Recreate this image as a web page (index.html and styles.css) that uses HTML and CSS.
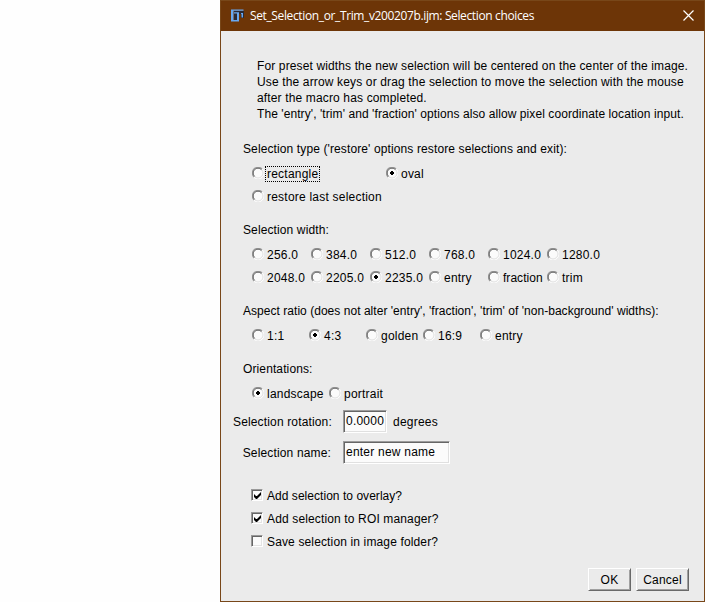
FILE: index.html
```html
<!DOCTYPE html>
<html lang="en">
<head>
<meta charset="utf-8">
<title>Selection choices</title>
<link rel="stylesheet" href="styles.css">
</head>
<body>
<svg width="0" height="0" class="defs" aria-hidden="true">
  <symbol id="off" viewBox="0 0 12 12">
    <circle cx="6" cy="6" r="5" fill="#fbfbfb"/>
    <path d="M10.2 1.8A5.5 5.5 0 0 1 1.8 10.2" fill="none" stroke="#fff"/>
    <path d="M9.5 2.5A4.6 4.6 0 0 1 2.5 9.5" fill="none" stroke="#e3e3e3"/>
    <path d="M2 10A5.4 5.4 0 0 1 10 2" fill="none" stroke="#999" stroke-width="1.2"/>
    <path d="M2.6 9.4A4.6 4.6 0 0 1 9.4 2.6" fill="none" stroke="#666"/>
  </symbol>
  <symbol id="on" viewBox="0 0 12 12">
    <use href="#off"/>
    <path d="M5 4h2v1h1v2h-1v1h-2v-1h-1v-2h1z" fill="#000" shape-rendering="crispEdges"/>
  </symbol>
</svg>
<main class="dialog">
  <header class="titlebar">
    <svg class="logo" viewBox="0 0 14 14">
      <path d="M3 2h10v7h-3V5H8v6H3z" fill="#2b2a35"/>
      <path d="M0 .5h12.500v1.200H2.500V11H6V4.500H3V3.300h5V12.500H0zM10 4h2v4.500h-1.500V5H10z" fill="#68a8f2"/>
    </svg>
    <h1>Set_Selection_or_Trim_v200207b.ijm: Selection choices</h1>
    <svg class="close" viewBox="0 0 11 11"><path d="M.5.5l10 10M10.5.5l-10 10" stroke="#fff" stroke-width="1.2" fill="none"/></svg>
  </header>
  <form class="content">
    <p class="message"><span class="m1">For preset widths the new selection will be centered on the center of the image.</span><br><span class="m2">Use the arrow keys or drag the selection to move the selection with the mouse</span><br><span class="m2">after the macro has completed.</span><br><span class="m4">The 'entry', 'trim' and 'fraction' options also allow pixel coordinate location input.</span></p>

    <h2>Selection type ('restore' options restore selections and exit):</h2>
    <div class="choices type">
      <label><svg><use href="#off"/></svg><span class="focused">rectangle</span></label>
      <label><svg><use href="#on"/></svg><span>oval</span></label>
      <label><svg><use href="#off"/></svg><span>restore last selection</span></label>
    </div>

    <h2>Selection width:</h2>
    <div class="choices widths">
      <label><svg><use href="#off"/></svg><span>256.0</span></label>
      <label><svg><use href="#off"/></svg><span>384.0</span></label>
      <label><svg><use href="#off"/></svg><span>512.0</span></label>
      <label><svg><use href="#off"/></svg><span>768.0</span></label>
      <label><svg><use href="#off"/></svg><span>1024.0</span></label>
      <label><svg><use href="#off"/></svg><span>1280.0</span></label>
      <label><svg><use href="#off"/></svg><span>2048.0</span></label>
      <label><svg><use href="#off"/></svg><span>2205.0</span></label>
      <label><svg><use href="#on"/></svg><span>2235.0</span></label>
      <label><svg><use href="#off"/></svg><span>entry</span></label>
      <label><svg><use href="#off"/></svg><span class="tight">fraction</span></label>
      <label><svg><use href="#off"/></svg><span>trim</span></label>
    </div>

    <h2 class="ratio-title">Aspect ratio (does not alter 'entry', 'fraction', 'trim' of 'non-background' widths):</h2>
    <div class="choices ratio">
      <label><svg><use href="#off"/></svg><span>1:1</span></label>
      <label><svg><use href="#on"/></svg><span>4:3</span></label>
      <label><svg><use href="#off"/></svg><span>golden</span></label>
      <label><svg><use href="#off"/></svg><span>16:9</span></label>
      <label><svg><use href="#off"/></svg><span>entry</span></label>
    </div>

    <h2>Orientations:</h2>
    <div class="choices orient">
      <label><svg><use href="#on"/></svg><span>landscape</span></label>
      <label><svg><use href="#off"/></svg><span>portrait</span></label>
    </div>

    <div class="field rotation"><span class="caption">Selection rotation:</span><span class="input short">0.0000</span><span>degrees</span></div>
    <div class="field"><span class="caption">Selection name:</span><span class="input long">enter new name</span></div>

    <div class="checks">
      <label><i class="box"><svg viewBox="0 0 7 7"><path d="M0 2v3l2 2h1l4-4V0L3 4H2z"/></svg></i><span class="tight">Add selection to overlay?</span></label>
      <label><i class="box"><svg viewBox="0 0 7 7"><path d="M0 2v3l2 2h1l4-4V0L3 4H2z"/></svg></i><span>Add selection to ROI manager?</span></label>
      <label><i class="box"></i><span>Save selection in image folder?</span></label>
    </div>

    <div class="buttons"><button type="button" class="ok">OK</button><button type="button" class="cancel">Cancel</button></div>
  </form>
</main>
</body>
</html>
```
FILE: styles.css
```css
* { box-sizing: border-box; }
body {
  margin: 0;
  height: 602px;
  overflow: hidden;
  background: #fefefe;
  color: #000;
  font: 12px/16px "Liberation Sans", Arial, sans-serif;
  letter-spacing: 0.22px;
}
.defs { position: absolute; }
.dialog {
  width: 485px;
  height: 602px;
  margin-left: 220px;
  border: 1px solid #784719;
  background: #ebebeb;
}
.titlebar {
  display: flex;
  align-items: center;
  height: 30px;
  padding: 0 10px;
  background: #6d3507;
  color: #fff;
}
.logo { width: 14px; height: 14px; }
.titlebar h1 {
  flex: 1;
  margin: 0 0 0 5px;
  font: 12px/16px "Open Sans", "Noto Sans", sans-serif;
  letter-spacing: -0.37px;
  white-space: nowrap;
}
.close { width: 11px; height: 11px; margin-top: -2px; }
.content { padding: 27px 15px 0 12px; }
.message { margin: 0 0 19px 24px; white-space: nowrap; }
.m1 { letter-spacing: 0.127px; }
.m2 { letter-spacing: 0.146px; }
.m4 { letter-spacing: 0.08px; }
h2 {
  height: 16px;
  margin: 14px 0 5px 10px;
  font-size: 12px;
  font-weight: normal;
  line-height: 16px;
  letter-spacing: 0.115px;
  white-space: nowrap;
}
.ratio-title { letter-spacing: 0.036px; }
.tight { letter-spacing: 0.04px; }
.choices { display: grid; grid-auto-rows: 23px; margin-left: 19px; }
.choices label, .checks label { display: flex; align-items: center; height: 23px; white-space: nowrap; }
.choices svg { width: 12px; height: 12px; margin: -1px 3px 0 0; flex: none; }
.type { grid-template-columns: 134px 134px; }
.widths { grid-template-columns: repeat(6, 59px); }
.ratio { grid-template-columns: repeat(5, 57px); }
.orient { grid-template-columns: repeat(2, 77px); }
.focused { height: 14px; margin: 0 -1px; padding: 0 1px; line-height: 14px; outline: 1px dotted #000; }
.field { display: flex; align-items: center; height: 31px; }
.rotation { margin-top: 1px; }
.caption { width: 98px; margin-right: 12px; text-align: right; white-space: nowrap; letter-spacing: 0.15px; }
.input {
  height: 23px;
  padding: 2px 1px 0 2px;
  border: 1px solid;
  border-color: #9c9c9c #fff #fff #9c9c9c;
  box-shadow: inset 1px 1px #666, inset -1px -1px #e0e0e0;
  background: #fbfbfb;
  overflow: hidden;
  white-space: nowrap;
}
.short { width: 44px; margin-right: 6px; }
.long { width: 107px; }
.checks { margin: 16px 0 0 18px; letter-spacing: 0.14px; }
.box {
  display: block;
  width: 12px;
  height: 12px;
  margin: -1px 4px 0 0;
  padding: 2px;
  border: 1px solid;
  border-color: #999 #fff #fff #999;
  box-shadow: inset 1px 1px #666, inset -1px -1px #e3e3e3;
  background: #fbfbfb;
}
.box svg { display: block; width: 7px; height: 7px; }
.buttons { display: flex; justify-content: flex-end; gap: 5px; margin-top: 15px; }
button {
  height: 23px;
  padding: 0;
  border: 1px solid;
  border-color: #fff #696969 #696969 #fff;
  box-shadow: inset 1px 1px #e8e8e8, inset -1px -1px #a0a0a0;
  background: #ebebeb;
  color: #000;
  font: inherit;
  letter-spacing: inherit;
}
.ok { width: 43px; }
.cancel { width: 53px; }
```
